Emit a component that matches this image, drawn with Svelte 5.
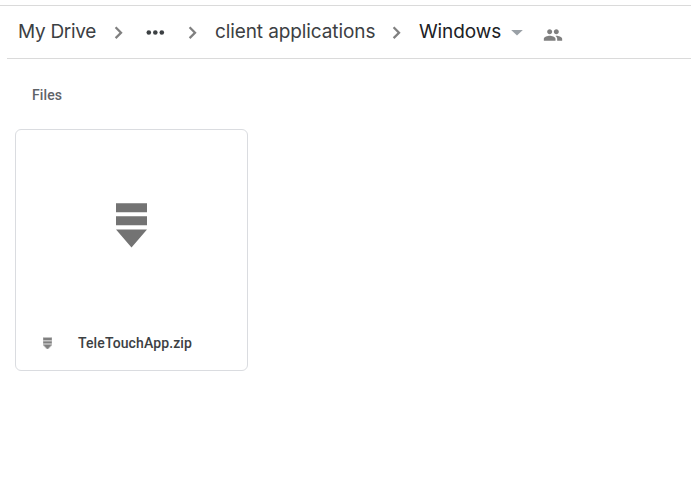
<script>
  const parents = [
    { label: 'My Drive', kind: 'root' },
    { label: '', kind: 'more' },
    { label: 'client applications', kind: 'folder' }
  ];
  const files = [{ name: 'TeleTouchApp.zip' }];
</script>

<div class="drive">
  <nav class="crumbs">
    {#each parents as crumb}
      {#if crumb.kind === 'more'}
        <svg class="more" width="20" height="6" viewBox="0 0 20 6" fill="#3c4043">
          <circle cx="2.8" cy="2.5" r="2.3" /><circle cx="9.3" cy="2.5" r="2.3" /><circle cx="15.8" cy="2.5" r="2.3" />
        </svg>
      {:else}
        <span class="crumb {crumb.kind}">{crumb.label}</span>
      {/if}
      <svg class="chevron" width="9" height="14" viewBox="0 0 9 14" fill="none" stroke="#808080" stroke-width="2.3">
        <path d="M1.6 1.3 7 6.7 1.6 12.1" />
      </svg>
    {/each}
    <span class="crumb current">Windows</span>
    <svg class="caret" width="12" height="6" viewBox="0 0 12 6" fill="#9aa0a6"><path d="M.2 0h11.6L6 5.4z" /></svg>
    <svg class="people" width="20" height="20" viewBox="0 0 24 24" fill="#808080">
      <path d="M16 11c1.66 0 2.99-1.34 2.99-3S17.66 5 16 5s-3 1.34-3 3 1.34 3 3 3zm-8 0c1.66 0 2.99-1.34 2.99-3S9.66 5 8 5 5 6.34 5 8s1.34 3 3 3zm0 2c-2.33 0-7 1.17-7 3.5V19h14v-2.5c0-2.33-4.67-3.5-7-3.5zm8 0c-.29 0-.62.02-.97.05 1.16.84 1.97 1.97 1.97 3.45V19h6v-2.5c0-2.33-4.67-3.5-7-3.5z" />
    </svg>
  </nav>
  <main>
    <h2>Files</h2>
    {#each files as file}
      <article>
        <div class="preview">
          <svg width="31" height="45" viewBox="0 0 31 45" fill="#737373">
            <path d="M0 .2h31v9H0zM0 13.2h31v9H0zM0 26.6h31L15.5 44.4z" />
          </svg>
        </div>
        <footer>
          <svg class="small" width="9" height="12" viewBox="0 0 9 12">
            <path fill="#c4c4c4" d="M0 0h9v8.5L5.7 12H3.3L0 8.5z" />
            <path fill="#808080" d="M.3 1h8.4v2H.3zM.3 4.4h8.4v1.8H.3zM.5 7.7h8L4.5 12z" />
          </svg>
          <span>{file.name}</span>
        </footer>
      </article>
    {/each}
  </main>
</div>

<style>
  :global(body) { background: #fff; }
  .drive {
    box-sizing: border-box;
    height: 483px;
    padding-top: 5px;
    overflow: hidden;
    background: #fff;
    font-family: Roboto, sans-serif;
  }
  .crumbs {
    display: flex;
    align-items: center;
    box-sizing: border-box;
    height: 54px;
    padding-left: 18px;
    border-top: 1px solid #dadada;
    background: linear-gradient(#dadada, #dadada) 7px 100% / 100% 1px no-repeat;
  }
  svg { display: block; flex: none; }
  .crumb {
    flex: none;
    font: 400 19px/26px Inter, sans-serif;
    color: #3c4043;
    white-space: nowrap;
    margin-bottom: 2px;
  }
  .root { width: 78px; letter-spacing: -0.3px; }
  .folder { width: 159px; letter-spacing: -0.1px; }
  .current { width: 82px; color: #202124; letter-spacing: -0.1px; }
  .chevron { margin: 0 18px; }
  .more { margin-left: 1px; margin-right: 4px; }
  .chevron + .more { margin-left: 5px; }
  .caret { margin-left: 10px; }
  .people { margin: 4px 0 0 20px; }
  main { padding: 28px 0 0 15px; }
  h2 {
    margin: 0 0 26px 17px;
    font-size: 14px;
    line-height: 16px;
    font-weight: 500;
    letter-spacing: 0.1px;
    color: #5f6368;
  }
  article {
    box-sizing: border-box;
    width: 233px;
    height: 242px;
    border: 1px solid #dadce0;
    border-radius: 6px;
  }
  .preview {
    display: flex;
    justify-content: center;
    height: 190px;
    padding-top: 73px;
    box-sizing: border-box;
  }
  footer { display: flex; align-items: center; height: 46px; padding-left: 27px; }
  .small { margin-right: 26px; }
  footer span {
    font-size: 14px;
    line-height: 20px;
    font-weight: 500;
    letter-spacing: 0.12px;
    color: #3c4043;
  }
</style>
